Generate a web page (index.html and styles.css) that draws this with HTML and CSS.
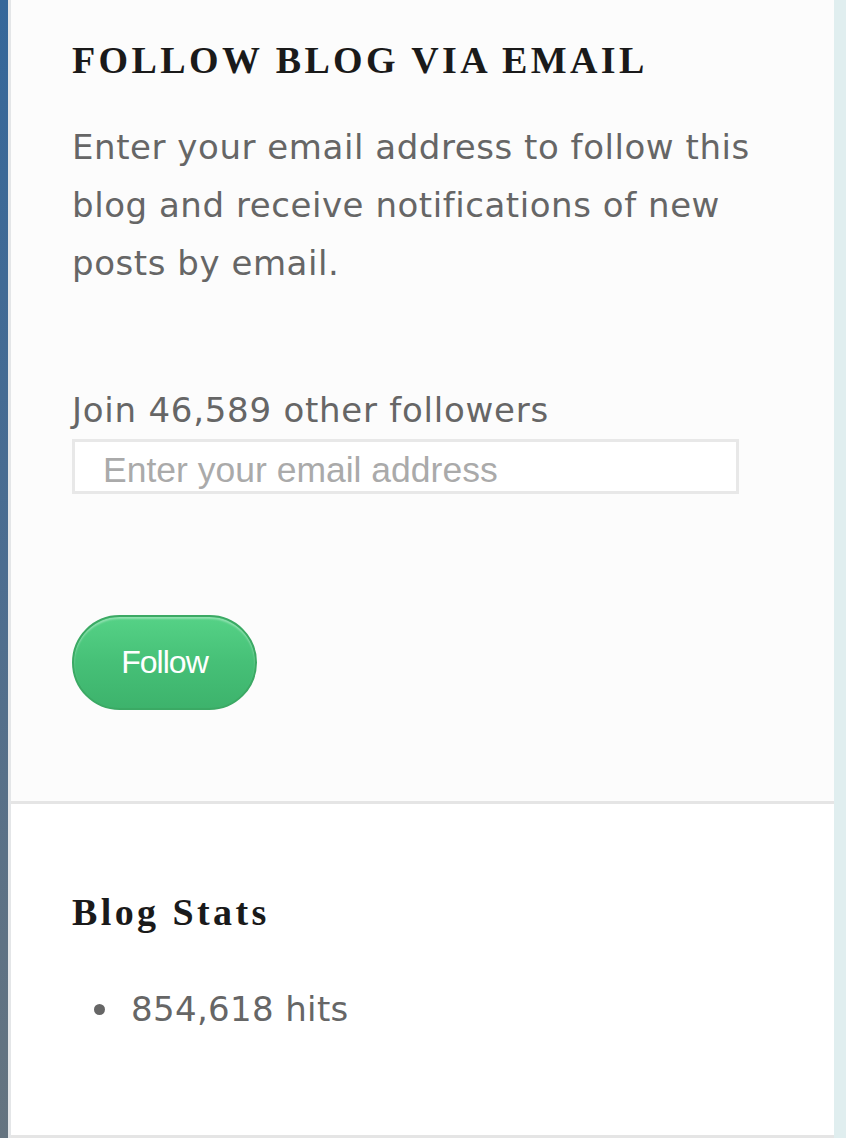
FILE: index.html
```html
<!DOCTYPE html>
<html>
<head>
<meta charset="utf-8">
<link rel="stylesheet" href="styles.css">
</head>
<body>
<div class="page">
  <div class="edge"></div>
  <div class="gutter"></div>
  <main class="column">
    <section class="widget follow">
      <h2 class="widget-title caps">Follow Blog via Email</h2>
      <p class="intro">Enter your email address to follow this blog and receive notifications of new posts by email.</p>
      <p class="count">Join 46,589 other followers</p>
      <input class="email" type="email" placeholder="Enter your email address">
      <button class="follow-btn" type="button">Follow</button>
    </section>
    <section class="widget stats">
      <h2 class="widget-title">Blog Stats</h2>
      <ul class="stat-list">
        <li>854,618 hits</li>
      </ul>
    </section>
  </main>
  <div class="side"></div>
</div>
</body>
</html>
```
FILE: styles.css
```css
html, body {
  margin: 0;
  padding: 0;
}
body {
  width: 846px;
  height: 1138px;
  overflow: hidden;
  background: #ffffff;
}
.page {
  display: flex;
  height: 1138px;
}
.edge {
  width: 8px;
  flex: none;
  background: linear-gradient(to bottom, #35679a 0%, #4c6d90 50%, #5b7186 75%, #657480 100%);
}
.gutter {
  width: 3px;
  flex: none;
  background: #e4e6e8;
}
.column {
  width: 823px;
  flex: none;
  display: flex;
  flex-direction: column;
}
.side {
  flex: 1;
  background: #e0eeef;
}
.widget {
  padding: 0 72px 0 61px;
  border-bottom: 3px solid #e5e5e5;
}
.follow {
  background: #fcfcfc;
  box-sizing: border-box;
  padding-top: 38px;
  height: 804px;
}
.stats {
  background: #ffffff;
  flex: 1;
  padding-top: 86px;
}
.widget-title {
  margin: 0;
  font-family: "Liberation Serif", "Times New Roman", serif;
  font-weight: bold;
  font-size: 38px;
  line-height: 45px;
  letter-spacing: 3.4px;
  color: #1a1a1a;
}
.caps {
  text-transform: uppercase;
}
.intro, .count {
  margin: 0;
  font-family: "DejaVu Sans", Verdana, sans-serif;
  font-size: 34px;
  line-height: 58px;
  letter-spacing: 0.55px;
  color: #666666;
}
.intro {
  margin-top: 35px;
}
.count {
  margin-top: 89px;
  letter-spacing: 0.75px;
}
.email {
  display: block;
  box-sizing: border-box;
  width: 667px;
  height: 55px;
  margin: 0;
  padding: 7px 0 0 28px;
  border: 3px solid #e8e8e8;
  background: #ffffff;
  font-family: "Liberation Sans", Arial, sans-serif;
  font-size: 35.5px;
  color: #555555;
  outline: none;
}
.email::placeholder {
  color: #aaaaaa;
}
.follow-btn {
  display: block;
  box-sizing: border-box;
  width: 185px;
  height: 95px;
  margin-top: 121px;
  padding: 0;
  border: 2px solid #3ba964;
  border-radius: 48px;
  background: linear-gradient(to bottom, #55d286 0%, #46c077 50%, #3db36c 100%);
  box-shadow: inset 0 2px 2px rgba(255, 255, 255, 0.35);
  font-family: "Liberation Sans", Arial, sans-serif;
  font-size: 32px;
  letter-spacing: -1px;
  color: #ffffff;
}
.stat-list {
  list-style: none;
  margin: 45px 0 0 0;
  padding: 0 0 0 22px;
  font-family: "DejaVu Sans", Verdana, sans-serif;
  font-size: 34px;
  line-height: 58px;
  letter-spacing: 0.35px;
  color: #666666;
}
.stat-list li {
  display: flex;
  align-items: center;
}
.stat-list li::before {
  content: "";
  width: 11px;
  height: 11px;
  margin-right: 26px;
  border-radius: 50%;
  background: #666666;
  flex: none;
}
```
